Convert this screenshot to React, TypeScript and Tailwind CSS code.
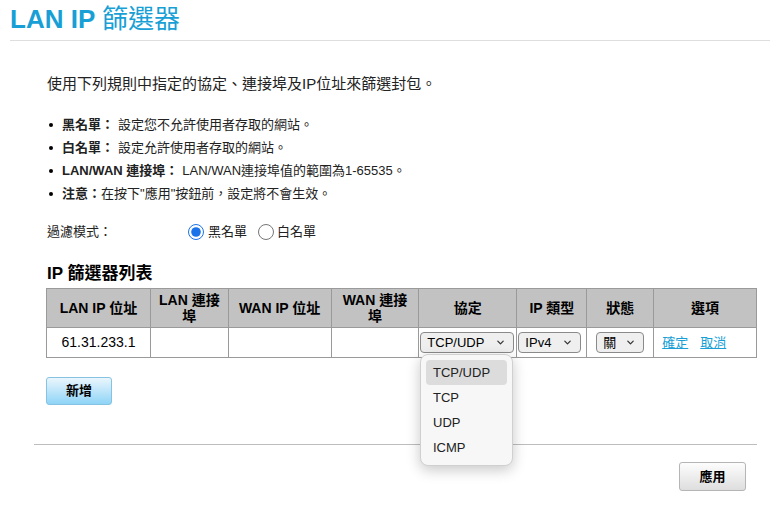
import React from 'react';

const font = { fontFamily: '"Liberation Sans", "Noto Sans CJK TC", sans-serif' };

const Chevron = () => (
    <svg className="w-[9px] h-[9px]" viewBox="0 0 10 10" fill="none" stroke="#333" strokeWidth={1.4}>
        <path d="M2 3.5l3 3 3-3" strokeLinecap="round" strokeLinejoin="round" />
    </svg>
);

const FakeSelect = ({ label, width }: { label: string; width: string }) => (
    <div className={`${width} h-[21px] flex items-center justify-between pl-[6px] pr-[8px] bg-[#efefef] border border-[#8a8a8a] rounded-[4px] text-[13px] text-black`}>
        <span>{label}</span>
        <Chevron />
    </div>
);

const rules = [
    { b: '黑名單：', t: '設定您不允許使用者存取的網站。', gap: true },
    { b: '白名單：', t: '設定允許使用者存取的網站。', gap: true },
    { b: 'LAN/WAN 連接埠：', t: 'LAN/WAN連接埠值的範圍為1-65535。', gap: true },
    { b: '注意：', t: '在按下"應用"按鈕前，設定將不會生效。', gap: false },
];

const headers = [
    { t: 'LAN IP 位址', w: 'w-[104px]' },
    { t: 'LAN 連接埠', w: 'w-[78px]' },
    { t: 'WAN IP 位址', w: 'w-[103px]' },
    { t: 'WAN 連接埠', w: 'w-[88px]' },
    { t: '協定', w: 'w-[98px]' },
    { t: 'IP 類型', w: 'w-[70px]' },
    { t: '狀態', w: 'w-[67px]' },
    { t: '選項', w: 'w-[103px]' },
];

export default function App() {
    return (
        <div className="w-[780px] h-[513px] bg-white text-[#222] overflow-hidden" style={font}>
            <div className="mx-[10px] h-[41px] border-b border-[#dedede] flex items-center">
                <h1 className="text-[26px] leading-none font-bold text-[#189fd6] -mt-[2px]">
                    LAN IP <span className="font-normal">篩選器</span>
                </h1>
            </div>

            <div className="pl-[34px] pr-[23px]">
                <div className="pl-[13px]">
                    <p className="mt-[32px] text-[15px] leading-[22px] text-[#222]">使用下列規則中指定的協定、連接埠及IP位址來篩選封包。</p>

                    <ul className="mt-[18px] text-[13px] leading-[23px] text-[#222]">
                        {rules.map((r) => (
                            <li key={r.b} className="flex items-center">
                                <span className="w-[4px] h-[4px] rounded-full bg-black ml-[2px] mr-[9px] shrink-0"></span>
                                <span className="font-bold">{r.b}</span>
                                <span className={r.gap ? 'ml-[4px]' : ''}>{r.t}</span>
                            </li>
                        ))}
                    </ul>

                    <div className="mt-[15px] h-[24px] flex items-center text-[13px] text-[#222]">
                        <span className="w-[141px]">過濾模式：</span>
                        <label className="flex items-center">
                            <input type="radio" name="mode" defaultChecked className="w-[16px] h-[16px] m-0 mr-[4px] accent-[#1a73e8]" />
                            黑名單
                        </label>
                        <label className="flex items-center ml-[11px]">
                            <input type="radio" name="mode" className="w-[16px] h-[16px] m-0 mr-[3px]" />
                            白名單
                        </label>
                    </div>

                    <h2 className="mt-[19px] text-[17px] leading-[22px] font-bold text-black">IP 篩選器列表</h2>
                </div>

                <div className="pl-[12px] relative">
                    <table className="mt-[3px] border-collapse border border-[#9a9a9a] text-[14px]">
                        <thead>
                            <tr className="h-[39px] bg-[#c2c2c2]">
                                {headers.map((h) => (
                                    <th key={h.t} className={`${h.w} border border-[#9a9a9a] font-bold text-black leading-[16px] px-[8px] text-center align-middle`}>
                                        {h.t}
                                    </th>
                                ))}
                            </tr>
                        </thead>
                        <tbody>
                            <tr className="h-[30px]">
                                <td className="border border-[#9a9a9a] text-center text-[14px] text-black">61.31.233.1</td>
                                <td className="border border-[#9a9a9a]"></td>
                                <td className="border border-[#9a9a9a]"></td>
                                <td className="border border-[#9a9a9a]"></td>
                                <td className="border border-[#9a9a9a] pl-[1px]">
                                    <FakeSelect label="TCP/UDP" width="w-[94px]" />
                                </td>
                                <td className="border border-[#9a9a9a] pl-[1px]">
                                    <FakeSelect label="IPv4" width="w-[63px]" />
                                </td>
                                <td className="border border-[#9a9a9a]">
                                    <div className="flex justify-center">
                                        <FakeSelect label="關" width="w-[48px]" />
                                    </div>
                                </td>
                                <td className="border border-[#9a9a9a] text-[13px] pl-[8px]">
                                    <a className="text-[#189fd6] underline mr-[12px]">確定</a>
                                    <a className="text-[#189fd6] underline">取消</a>
                                </td>
                            </tr>
                        </tbody>
                    </table>

                    {/* open protocol dropdown */}
                    <div className="absolute left-[386px] top-[66px] w-[93px] bg-[#f7f7f7] border border-[#d0d0d0] rounded-[8px] shadow-[0_4px_14px_rgba(0,0,0,0.22)] p-[5px] text-[13px] text-[#222] z-10">
                        <div className="h-[25px] flex items-center pl-[7px] bg-[#dcdcdc] rounded-[4px]">TCP/UDP</div>
                        <div className="h-[25px] flex items-center pl-[7px]">TCP</div>
                        <div className="h-[25px] flex items-center pl-[7px]">UDP</div>
                        <div className="h-[25px] flex items-center pl-[7px]">ICMP</div>
                    </div>

                    <button className="mt-[19px] w-[66px] h-[28px] rounded-[3px] border border-[#86c3e3] bg-gradient-to-b from-[#eaf6fd] to-[#8ed4f6] text-[13px] font-bold text-black">
                        新增
                    </button>
                </div>

                <div className="mt-[39px] border-t border-[#bdbdbd]"></div>

                <div className="flex justify-end pr-[11px] mt-[17px]">
                    <button className="w-[67px] h-[29px] rounded-[3px] border border-[#b5b5b5] bg-gradient-to-b from-[#fdfdfd] to-[#dedede] text-[13px] font-bold text-black">
                        應用
                    </button>
                </div>
            </div>
        </div>
    );
}
